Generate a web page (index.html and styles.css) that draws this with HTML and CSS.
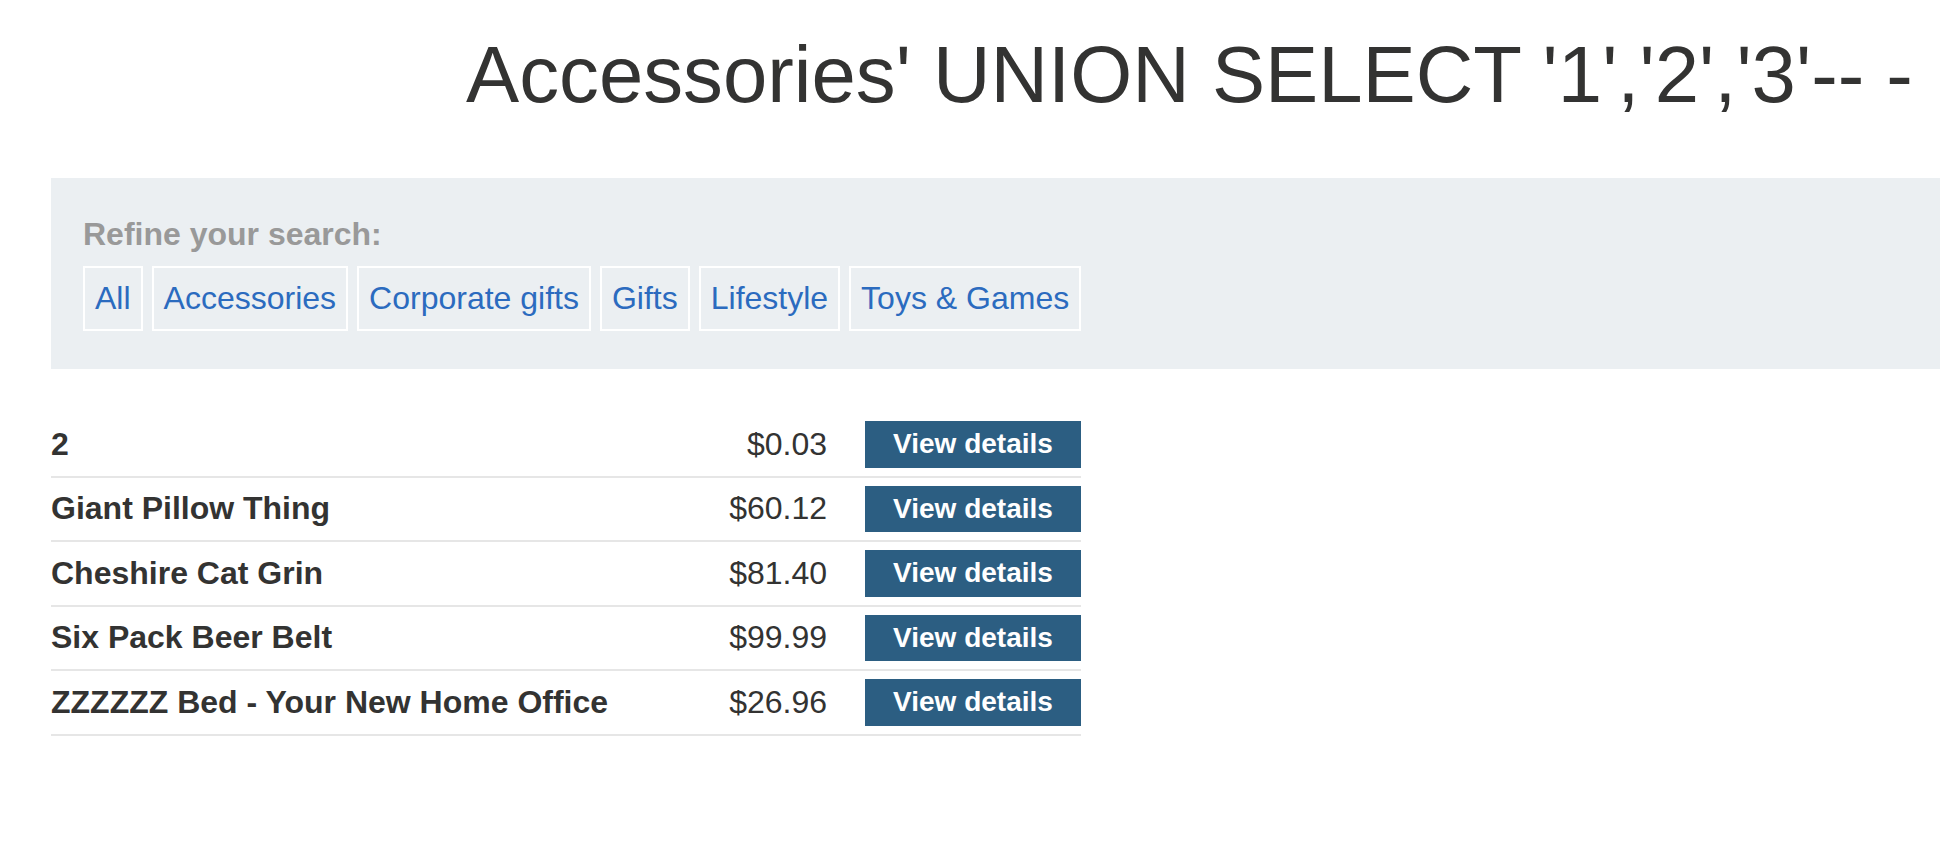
FILE: index.html
```html
<!DOCTYPE html>
<html lang="en">
<head>
<meta charset="utf-8">
<title>Accessories</title>
<link rel="stylesheet" href="styles.css">
</head>
<body>
<div class="container">
  <h1 class="title">Accessories' UNION SELECT '1','2','3'-- -</h1>
  <section class="filter">
    <div class="filter-label">Refine your search:</div>
    <div class="filter-links">
      <a class="filter-link" href="#">All</a>
      <a class="filter-link" href="#">Accessories</a>
      <a class="filter-link" href="#">Corporate gifts</a>
      <a class="filter-link" href="#">Gifts</a>
      <a class="filter-link" href="#">Lifestyle</a>
      <a class="filter-link" href="#">Toys &amp; Games</a>
    </div>
  </section>
  <div class="products">
    <div class="row">
      <span class="name">2</span>
      <span class="price">$0.03</span>
      <a class="btn" href="#">View details</a>
    </div>
    <div class="row">
      <span class="name">Giant Pillow Thing</span>
      <span class="price">$60.12</span>
      <a class="btn" href="#">View details</a>
    </div>
    <div class="row">
      <span class="name">Cheshire Cat Grin</span>
      <span class="price">$81.40</span>
      <a class="btn" href="#">View details</a>
    </div>
    <div class="row">
      <span class="name">Six Pack Beer Belt</span>
      <span class="price">$99.99</span>
      <a class="btn" href="#">View details</a>
    </div>
    <div class="row">
      <span class="name">ZZZZZZ Bed - Your New Home Office</span>
      <span class="price">$26.96</span>
      <a class="btn" href="#">View details</a>
    </div>
  </div>
</div>
</body>
</html>
```
FILE: styles.css
```css
html {
  overflow: hidden;
}
body {
  margin: 0;
  background: #ffffff;
  font-family: "Liberation Sans", Arial, sans-serif;
  color: #333332;
}
.container {
  width: 2277px;
  margin-left: 51px;
}
.title {
  margin: 29px 0 0;
  font-size: 79.7px;
  font-weight: normal;
  line-height: 92px;
  text-align: center;
  color: #333332;
  white-space: nowrap;
}
.filter {
  margin-top: 57px;
  background: #ebeff2;
  padding: 38px 32px 38px;
}
.filter-label {
  font-size: 32px;
  font-weight: bold;
  color: #999999;
  line-height: 37px;
  margin-bottom: 13px;
}
.filter-links {
  display: flex;
  gap: 9px;
}
.filter-link {
  display: block;
  border: 2px solid #ffffff;
  padding: 12px 10px;
  font-size: 32px;
  line-height: 37px;
  color: #2b6bbf;
  text-decoration: none;
}
.products {
  width: 1030px;
  margin-top: 44px;
}
.row {
  display: flex;
  align-items: center;
  padding: 8px 0;
  border-bottom: 2px solid #e6e6e6;
}
.name {
  flex: 1;
  font-size: 32px;
  font-weight: bold;
  color: #333332;
  line-height: 37px;
}
.price {
  font-size: 32px;
  color: #333332;
  line-height: 37px;
  margin-right: 38px;
}
.btn {
  display: block;
  width: 216px;
  height: 46.5px;
  box-sizing: border-box;
  background: #2c5e82;
  color: #ffffff;
  font-size: 28px;
  font-weight: bold;
  line-height: 46.5px;
  text-align: center;
  text-decoration: none;
}
```
